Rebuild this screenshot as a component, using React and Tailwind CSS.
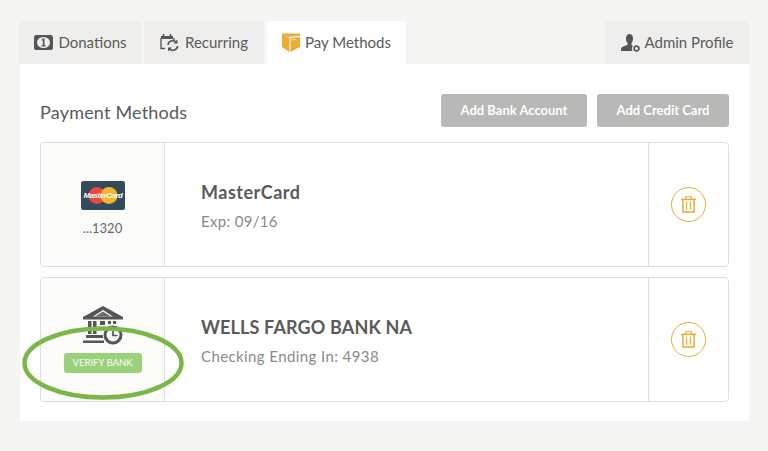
import React from 'react';

const DonationIcon = () => (
  <svg width="19" height="15" viewBox="0 0 19 15" className="shrink-0">
    <path fill="#555" d="M1.500 0h16L19 1.500v12L17.500 15h-16L0 13.500v-12z" />
    <ellipse cx="9.500" cy="7.500" rx="6.500" ry="5.500" fill="#efeeec" />
    <path d="M8.800 3.500h1.700v6.700h1v1.200H7.600v-1.200h1.200V5.500H7.800V4.600z" fill="#555" />
  </svg>
);

const RecurringIcon = () => (
  <svg width="20" height="19" viewBox="0 0 20 19" fill="none" className="shrink-0">
    <path d="M1 3h12v3H1z" fill="#555" />
    <path d="M3.500 1v2M10.500 1v2" stroke="#555" strokeWidth="1.600" />
    <path d="M1 5v10.500h4" stroke="#555" strokeWidth="1.300" />
    <path d="M14 5v2" stroke="#555" strokeWidth="1.300" />
    <path d="M8 12a4.700 4.700 0 0 1 8-3" stroke="#555" strokeWidth="1.700" />
    <path d="M17.500 6.500v4h-4z" fill="#555" />
    <path d="M17.500 13a4.700 4.700 0 0 1-8 3" stroke="#555" strokeWidth="1.700" />
    <path d="M8 18.500v-4h4z" fill="#555" />
  </svg>
);

const PayIcon = () => (
  <svg width="18" height="19" viewBox="0 0 18 19" className="shrink-0">
    <path d="M0 .5h18V3L6 4 0 1.500z" fill="#e9ac35" />
    <path d="M0 1.500 7.500 5v14L0 14z" fill="#e9ac35" />
    <path d="M8.500 5 18 4v10l-9.500 5z" fill="#e9ac35" />
    <path d="M9 7l5-.6" stroke="#fff" strokeWidth="0.700" />
  </svg>
);

const AdminIcon = () => (
  <svg width="19" height="18" viewBox="0 0 19 18" className="shrink-0">
    <path d="M5 4.500C5 1.500 6.500 0 8.500 0S12 1.500 12 4.500c0 2-.7 3.500-1.500 4.500v2l1.500.8A4.500 4.500 0 0 0 11.500 17H0v-1.500c0-2 1.500-3 6.500-4.500V9C5.700 8 5 6.500 5 4.500z" fill="#555" />
    <circle cx="15.500" cy="14.500" r="2.300" fill="none" stroke="#555" strokeWidth="1.500" />
    <circle cx="15.500" cy="14.500" r="3.100" fill="none" stroke="#555" strokeWidth="0.900" strokeDasharray="1.200 1.200" />
  </svg>
);

const CardLogo = () => (
  <svg width="44" height="29" viewBox="0 0 44 29" className="shrink-0">
    <rect width="44" height="29" rx="2.500" fill="#34495e" />
    <circle cx="16" cy="14.500" r="8.500" fill="#e8493f" />
    <circle cx="28" cy="14.500" r="8.500" fill="#f0b62e" />
    <text x="22" y="17" textAnchor="middle" fill="#fff" fontSize="7.800" fontStyle="italic" fontWeight="700" fontFamily="Liberation Sans, sans-serif" letterSpacing="-0.400">MasterCard</text>
  </svg>
);

const BankIcon = () => (
  <svg width="42" height="40" viewBox="0 0 42 40" className="shrink-0">
    <path d="M21 1 41 12v2.500H1V12zM21 5 11 11.500h20z" fill="#555" fillRule="evenodd" />
    <path d="M21 6.500 13 11.500h16z" fill="#6b6b6b" />
    <path d="M6 16h3.500v13H6zM11 16h3.500v13H11zM18 16h5v4h-5zM26 16h3v3h-3zM31 16h3v3h-3z" fill="#555" />
    <path d="M4 30h18v3H4zM1 35.500h21V38H1z" fill="#555" />
    <circle cx="31" cy="29.500" r="10.500" fill="#fbfbf9" />
    <circle cx="31" cy="30" r="8" fill="none" stroke="#555" strokeWidth="3" />
    <path d="M31 25v5.500h4.500" fill="none" stroke="#555" strokeWidth="1.700" />
  </svg>
);

const TrashButton = () => (
  <button className="w-[35px] h-[35px] -mt-px rounded-full border-[1.5px] border-[#e9ac35] flex items-center justify-center">
    <svg width="15" height="17" viewBox="0 0 16 18" fill="none" stroke="#e9ac35" strokeWidth="1.200">
      <path d="M0 3.500h16" strokeWidth="1.600" />
      <path d="M5 3V.7h6V3" />
      <path d="M2 4v13h12V4" strokeWidth="1.600" />
      <path d="M6 6v8.500M10 6v8.500" />
    </svg>
  </button>
);

const Tab = ({ icon, label, className }) => (
  <div className={`h-[43px] flex items-center justify-center gap-[5px] rounded-t-[3px] text-[15px] text-[#5a5a5a] ${className}`}>
    {icon}
    <span>{label}</span>
  </div>
);

const PayRow = ({ left, title, titleClass, sub, subClass }) => (
  <div className="h-[125px] flex border border-[#dedede] rounded-[4px]">
    <div className="w-[124px] shrink-0 bg-[#fbfbf9] border-r border-[#dedede] rounded-l-[4px] flex flex-col items-center">
      {left}
    </div>
    <div className="flex-1 pl-9 pt-[38px]">
      <div className={`text-[18px] leading-[22px] font-bold text-[#5a5a5a] ${titleClass}`}>{title}</div>
      <div className={`text-[15px] leading-[20px] mt-[8px] text-[#8a8a8a] ${subClass}`}>{sub}</div>
    </div>
    <div className="w-[80px] shrink-0 border-l border-[#dedede] flex items-center justify-center">
      <TrashButton />
    </div>
  </div>
);

export default function App() {
  return (
    <div className="relative w-[768px] h-[451px] overflow-hidden bg-[#f5f5f3] font-['Lato',sans-serif] pt-[21px] pl-[19px]">
      {/* Tabs */}
      <div className="flex w-[730px]">
        <Tab icon={<DonationIcon />} label="Donations" className="w-[123px] bg-[#efeeec]" />
        <Tab icon={<RecurringIcon />} label="Recurring" className="w-[120px] ml-[2px] bg-[#efeeec]" />
        <Tab icon={<PayIcon />} label="Pay Methods" className="w-[139px] ml-[3px] bg-white" />
        <Tab icon={<AdminIcon />} label="Admin Profile" className="w-[144px] ml-auto bg-[#efeeec]" />
      </div>

      {/* Panel */}
      <div className="ml-[1px] w-[729px] h-[357px] bg-white px-5 pt-[30px]">
        <div className="flex items-center justify-between h-[33px]">
          <h1 className="text-[18px] tracking-[0.2px] text-[#5a5a5a] pt-[4px]">Payment Methods</h1>
          <div className="flex gap-[10px]">
            <button className="w-[146px] h-[33px] rounded-[3px] bg-[#b8b8b6] text-white text-[13px] font-bold">Add Bank Account</button>
            <button className="w-[132px] h-[33px] rounded-[3px] bg-[#b8b8b6] text-white text-[13px] font-bold">Add Credit Card</button>
          </div>
        </div>

        <div className="mt-[15px] flex flex-col gap-[10px]">
          <PayRow
            title="MasterCard"
            titleClass="tracking-[0.5px]"
            sub="Exp: 09/16"
            subClass="tracking-[0.3px]"
            left={
              <div className="flex flex-col items-center pt-[38px]">
                <CardLogo />
                <div className="text-[13px] leading-4 mt-[10px] text-[#666]">...1320</div>
              </div>
            }
          />
          <PayRow
            title="WELLS FARGO BANK NA"
            titleClass="tracking-[0.15px]"
            sub="Checking Ending In: 4938"
            subClass="tracking-[0.4px]"
            left={
              <div className="flex flex-col items-center pt-[27px]">
                <BankIcon />
                <div className="mt-[8px] w-[78px] h-[20px] rounded-[3px] bg-[#9ad17b] text-white text-[9.5px] flex items-center justify-center">VERIFY BANK</div>
              </div>
            }
          />
        </div>
      </div>

      {/* hand-drawn highlight around the verify button */}
      <svg width="164" height="76" viewBox="0 0 164 76" fill="none" className="absolute left-[21px] top-[325px]">
        <ellipse cx="82" cy="38" rx="78.500" ry="34.500" stroke="#7ab648" strokeWidth="4.500" />
      </svg>
    </div>
  );
}
